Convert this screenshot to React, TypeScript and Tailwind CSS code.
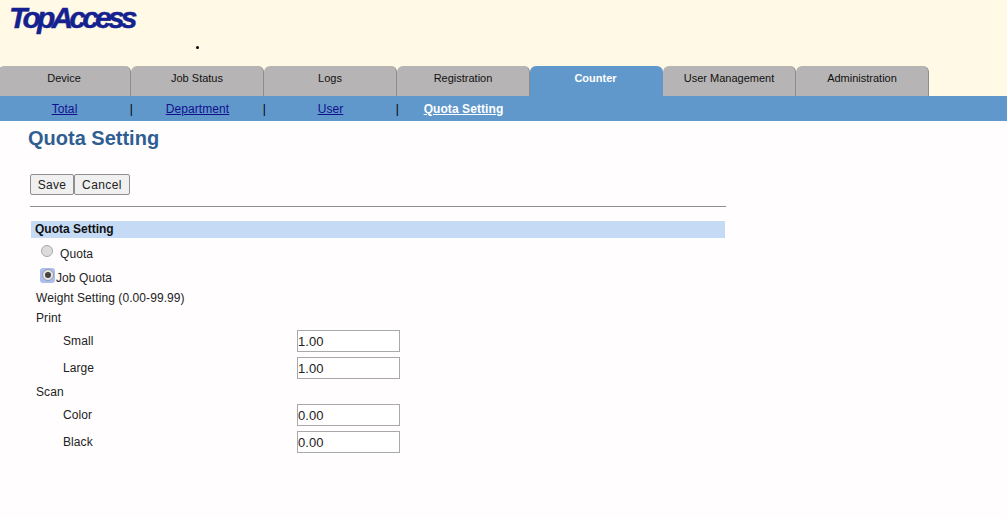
// App.tsx
import React from 'react';

const tabs = ['Device', 'Job Status', 'Logs', 'Registration', 'Counter', 'User Management', 'Administration'];
const subLinks = ['Total', 'Department', 'User', 'Quota Setting'];

function WeightRow({ label, value, mb }: { label: string; value: string; mb: string }) {
  return (
    <div className={`flex items-center h-[22px] ${mb}`}>
      <span className="w-[267px] pl-[33px]">{label}</span>
      <input
        type="text"
        readOnly
        value={value}
        className="w-[103px] h-[22px] border border-[#a9a9a9] bg-white px-0 text-[13px] text-[#222] outline-none"
      />
    </div>
  );
}

function App() {
  return (
    <div className="w-[1007px] h-[518px] overflow-hidden bg-[#fffdfe] font-['Liberation_Sans',Arial,sans-serif] text-[12px] tracking-[0.08px] text-[#222]">
      {/* Header */}
      <header className="h-[66px] bg-[#fff9e6] pl-[9px]">
        <div className="h-[37px] text-[30px] leading-[35px] font-bold italic text-[#14218f] tracking-[-3.8px] [-webkit-text-stroke:0.4px_#14218f]">TopAccess</div>
        <div className="ml-[187px] mt-[9px] w-[3px] h-[3px] rounded-full bg-black" />
      </header>

      {/* Tabs */}
      <nav className="flex h-[30px] -ml-[2px] bg-[#fff9e6]">
        {tabs.map(tab => (
          <div
            key={tab}
            className={
              tab === 'Counter'
                ? 'w-[133px] rounded-t-[6px] bg-[#6198cc] pt-[4px] pr-[2px] text-center text-[11px] font-bold tracking-normal text-white'
                : 'w-[133px] rounded-t-[6px] border-r border-[#8c8c8c] bg-[#b6b4b4] pt-[4px] text-center text-[11px] tracking-normal text-[#111]'
            }
          >
            {tab}
          </div>
        ))}
      </nav>

      {/* Sub menu */}
      <div className="flex h-[25px] -ml-[2px] items-center bg-[#6198cc]">
        {subLinks.map((link, i) => (
          <div key={link} className="relative w-[133px] text-center">
            <a
              href="#"
              className={link === 'Quota Setting' ? 'font-bold text-white underline' : 'text-[#10108c] underline'}
            >
              {link}
            </a>
            {i < 3 && <span className="absolute -right-[2px] top-0 text-black">|</span>}
          </div>
        ))}
      </div>

      {/* Main Content */}
      <main className="pl-[30px] w-[726px]">
        <h1 className="ml-[-2px] mt-[5px] h-[25px] text-[20px] leading-[25px] font-bold tracking-normal text-[#2f5f92]">Quota Setting</h1>

        <div className="mt-[23px] flex">
          <button className="w-[44px] h-[21px] rounded-[2px] border border-[#8f8f8f] bg-[#f0f0f0] text-[12px] tracking-[0.3px] text-[#222]">Save</button>
          <button className="w-[56px] h-[21px] rounded-[2px] border border-[#8f8f8f] bg-[#f0f0f0] text-[12px] tracking-[0.4px] text-[#222]">Cancel</button>
        </div>

        <hr className="mt-[11px] border-t border-[#8f8f8f]" />

        <div className="ml-[1px] mr-[1px] mt-[14px] h-[17px] bg-[#c4daf5] pl-[4px] leading-[17px] font-bold tracking-normal text-[#111]">Quota Setting</div>

        <div className="mt-[8px] flex h-[16px] items-center pl-[11px]">
          <span className="w-[12px] h-[12px] -mt-[7px] rounded-full border border-[#a8a8a8] bg-[#dcdcdc]" />
          <span className="ml-[7px]">Quota</span>
        </div>
        <div className="mt-[8px] flex h-[16px] items-center pl-[10px]">
          <span className="flex w-[15px] h-[15px] -mt-[6px] items-center justify-center rounded-[3px] bg-[#a9bff2]">
            <span className="flex w-[12px] h-[12px] items-center justify-center rounded-full border border-[#999] bg-[#e6e6e6]">
              <span className="w-[6px] h-[6px] rounded-full bg-[#444]" />
            </span>
          </span>
          <span className="ml-[1px]">Job Quota</span>
        </div>

        <div className="ml-[6px] mt-[5px] h-[14px] leading-[14px]">Weight Setting (0.00-99.99)</div>
        <div className="ml-[6px] mt-[6px] h-[14px] leading-[14px]">Print</div>
        <div className="mt-[5px]">
          <WeightRow label="Small" value="1.00" mb="mb-[5px]" />
          <WeightRow label="Large" value="1.00" mb="" />
        </div>
        <div className="ml-[6px] mt-[6px] h-[14px] leading-[14px]">Scan</div>
        <div className="mt-[5px]">
          <WeightRow label="Color" value="0.00" mb="mb-[5px]" />
          <WeightRow label="Black" value="0.00" mb="" />
        </div>
      </main>
    </div>
  );
}

export default App;
